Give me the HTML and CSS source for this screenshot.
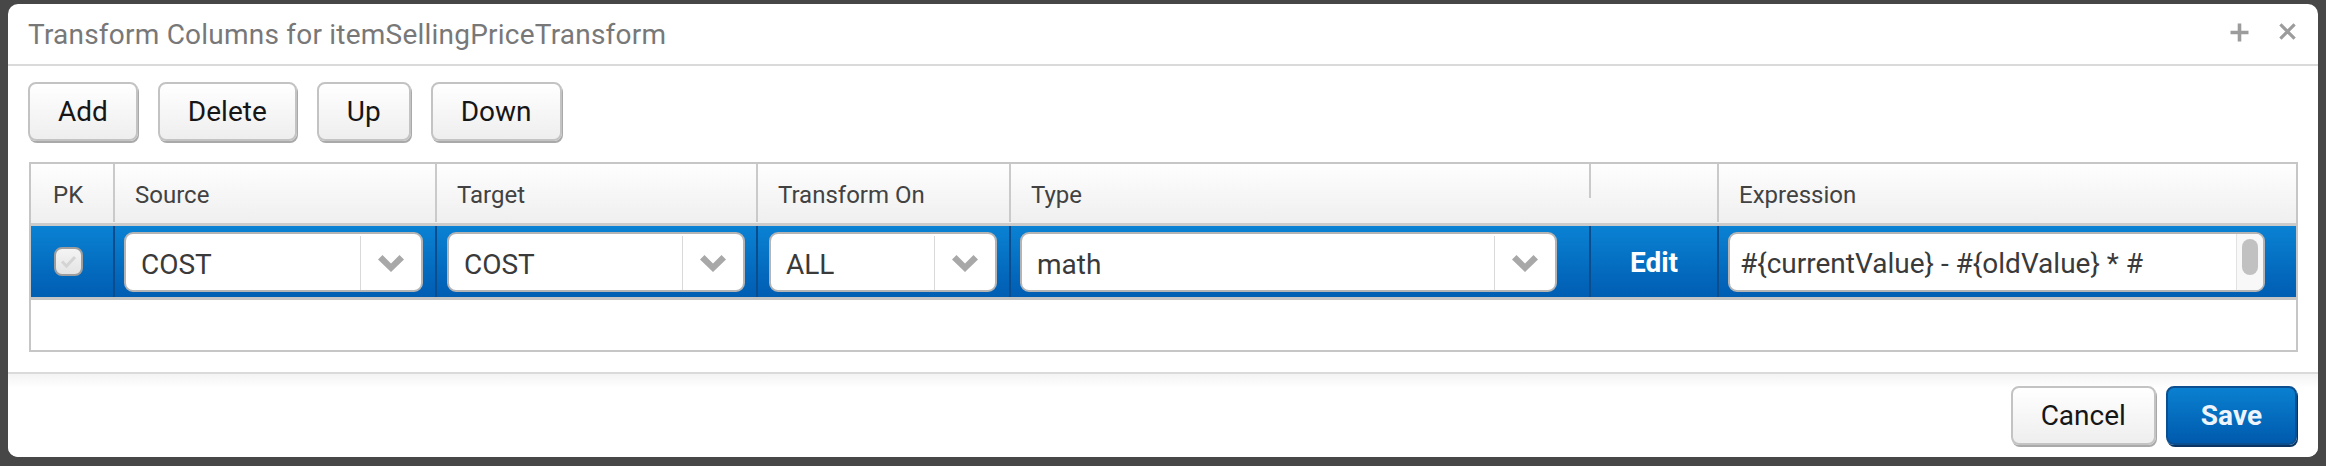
FILE: index.html
```html
<!DOCTYPE html>
<html>
<head>
<meta charset="utf-8">
<title>Transform Columns</title>
<link rel="stylesheet" href="styles.css">
</head>
<body>
<div class="dialog">
  <div class="dlg-head">
    <div class="dlg-title">Transform Columns for itemSellingPriceTransform</div>
    <div class="dlg-tools">
      <svg class="tool" viewBox="0 0 19 19" width="19" height="19"><path d="M9.5 0.5V18.5M0.5 9.5H18.5"/></svg>
      <svg class="tool tool-x" viewBox="0 0 19 19" width="19" height="18"><path d="M2 1.5L17 16.5M17 1.5L2 16.5"/></svg>
    </div>
  </div>
  <div class="dlg-body">
    <div class="toolbar">
      <button class="btn">Add</button>
      <button class="btn">Delete</button>
      <button class="btn">Up</button>
      <button class="btn">Down</button>
    </div>
    <div class="grid">
      <div class="grid-head">
        <div class="hc hc-first">PK</div>
        <div class="hc">Source</div>
        <div class="hc">Target</div>
        <div class="hc">Transform On</div>
        <div class="hc">Type</div>
        <div class="hc hc-edit"></div>
        <div class="hc">Expression</div>
      </div>
      <div class="grid-row">
        <div class="rc rc-first">
          <span class="check"><svg viewBox="0 0 25 25" width="25" height="25"><path d="M6 12.5L10.5 17L19 8"/></svg></span>
        </div>
        <div class="rc">
          <div class="select w-source"><span class="sel-text">COST</span><span class="sel-arrow"><svg viewBox="0 0 26 17" width="26" height="17"><path d="M0 4.5L4.5 0L13 8.5L21.5 0L26 4.5L13 17Z"/></svg></span></div>
        </div>
        <div class="rc rc-target">
          <div class="select w-target"><span class="sel-text">COST</span><span class="sel-arrow"><svg viewBox="0 0 26 17" width="26" height="17"><path d="M0 4.5L4.5 0L13 8.5L21.5 0L26 4.5L13 17Z"/></svg></span></div>
        </div>
        <div class="rc rc-on">
          <div class="select w-on"><span class="sel-text">ALL</span><span class="sel-arrow"><svg viewBox="0 0 26 17" width="26" height="17"><path d="M0 4.5L4.5 0L13 8.5L21.5 0L26 4.5L13 17Z"/></svg></span></div>
        </div>
        <div class="rc">
          <div class="select w-type"><span class="sel-text">math</span><span class="sel-arrow"><svg viewBox="0 0 26 17" width="26" height="17"><path d="M0 4.5L4.5 0L13 8.5L21.5 0L26 4.5L13 17Z"/></svg></span></div>
        </div>
        <div class="rc rc-edit">Edit</div>
        <div class="rc">
          <div class="expr"><span class="expr-text">#{currentValue} - #{oldValue} * #</span><span class="scroll"><span class="thumb"></span></span></div>
        </div>
      </div>
      <div class="grid-empty"></div>
    </div>
  </div>
  <div class="dlg-foot">
    <button class="btn">Cancel</button>
    <button class="btn btn-primary">Save</button>
  </div>
</div>
</body>
</html>
```

FILE: styles.css
```css
* { box-sizing: border-box; }

html, body {
  margin: 0;
  height: 100%;
}

body {
  background: #474747;
  padding: 4px 8px 9px 8px;
  font-family: Roboto, "Liberation Sans", sans-serif;
}

.dialog {
  background: #ffffff;
  border-radius: 10px;
  overflow: hidden;
  height: 453px;
}

/* header */
.dlg-head {
  height: 62px;
  display: flex;
  align-items: center;
  padding: 0 21px 0 20px;
  border-bottom: 2px solid #dadada;
}

.dlg-title {
  flex: 1;
  font-size: 28px;
  letter-spacing: 0.22px;
  color: #787878;
  white-space: nowrap;
}

.dlg-tools {
  display: flex;
  gap: 29px;
  align-self: flex-start;
  margin-top: 19px;
}

.tool path {
  stroke: #9c9c9c;
  stroke-width: 3.6;
  fill: none;
}

.tool-x path {
  stroke-width: 3.4;
}

/* body */
.dlg-body {
  padding: 16px 20px 20px 20px;
}

.toolbar {
  display: flex;
  gap: 20px;
  margin-bottom: 21px;
}

.btn {
  height: 59px;
  padding: 0 28px;
  border: 2px solid #c3c3c3;
  border-radius: 8px;
  background: linear-gradient(#ffffff, #eeeeee);
  box-shadow: 1px 2px 0 #a9a9a9;
  font-family: Roboto, "Liberation Sans", sans-serif;
  font-size: 28px;
  color: #161616;
  line-height: 1;
  margin: 0;
}

.btn-primary {
  padding: 0 33px;
  border-color: #0b4f90;
  background: linear-gradient(#0a80d0, #005aad);
  box-shadow: 1px 2px 0 #093463;
  color: #eef4fb;
  font-weight: bold;
}

/* grid */
.grid {
  margin-left: 1px;
  border: 2px solid #c6c6c6;
}

.grid-head,
.grid-row {
  display: grid;
  grid-template-columns: 82px 322px 321px 253px 580px 128px 1fr;
}

.grid-head {
  height: 62px;
  background: linear-gradient(#fefefe, #efefef);
  border-bottom: 3px solid #cbcbcb;
}

.hc {
  border-left: 2px solid #cacaca;
  padding: 4px 0 0 20px;
  line-height: 55px;
  height: 58px;
  font-size: 24px;
  color: #424242;
  white-space: nowrap;
}

.hc-first {
  border-left: none;
  padding-left: 22px;
}

.hc-edit {
  border-left: none;
  background: linear-gradient(#cacaca, #cacaca) left top / 2px 34px no-repeat;
}

.grid-row {
  height: 74px;
  background: linear-gradient(#0a82d3, #005db2);
  border-bottom: 3px solid #c4c4c4;
}

.rc {
  border-left: 2px solid #0b4d8c;
  display: flex;
  align-items: center;
  padding-left: 9px;
}

.rc-first {
  border-left: none;
  padding-left: 23px;
}

.rc-target { padding-left: 10px; }
.rc-on { padding-left: 11px; }

.rc-edit {
  justify-content: center;
  padding-left: 0;
  color: #ffffff;
  font-size: 28px;
  font-weight: bold;
  padding-top: 2px;
}

.check {
  width: 29px;
  height: 29px;
  border: 2px solid #9d9d9d;
  border-radius: 8px;
  background: linear-gradient(#f4f4f4, #e4e4e4);
  display: flex;
  align-items: center;
  justify-content: center;
}

.check path {
  stroke: #d4d4d4;
  stroke-width: 3;
  fill: none;
}

.select {
  height: 60px;
  display: flex;
  border: 2px solid #b4b4b4;
  border-radius: 9px;
  background: #ffffff;
  margin-top: 1px;
}

.w-source { width: 299px; }
.w-target { width: 298px; }
.w-on { width: 228px; }
.w-type { width: 537px; }

.sel-text {
  flex: 1;
  padding: 4px 0 0 15px;
  display: flex;
  align-items: center;
  font-size: 28px;
  color: #3a3a3a;
  white-space: nowrap;
}

.sel-arrow {
  width: 61px;
  margin: 2px 0 0 0;
  border-left: 1px solid #d9d9d9;
  display: flex;
  align-items: center;
  justify-content: center;
}

.sel-arrow path {
  fill: #a8a8a8;
}

.expr {
  width: 537px;
  height: 60px;
  display: flex;
  border: 2px solid #b4b4b4;
  border-radius: 9px;
  background: #ffffff;
  overflow: hidden;
  margin-top: 1px;
}

.expr-text {
  flex: 1;
  padding: 2px 0 0 10px;
  display: flex;
  align-items: center;
  font-size: 28px;
  color: #3a3a3a;
  white-space: nowrap;
  overflow: hidden;
}

.scroll {
  width: 27px;
  background: #f8f8f8;
  border-left: 1px solid #e2e2e2;
  display: flex;
  justify-content: center;
  padding-top: 5px;
}

.thumb {
  width: 16px;
  height: 36px;
  border-radius: 8px;
  background: #c1c1c1;
}

.grid-empty {
  height: 50px;
}

/* footer */
.dlg-foot {
  border-top: 2px solid #dadada;
  background: linear-gradient(#f3f3f3, #ffffff 14px);
  padding: 12px 21px 12px 0;
  display: flex;
  justify-content: flex-end;
  gap: 10px;
}
```
